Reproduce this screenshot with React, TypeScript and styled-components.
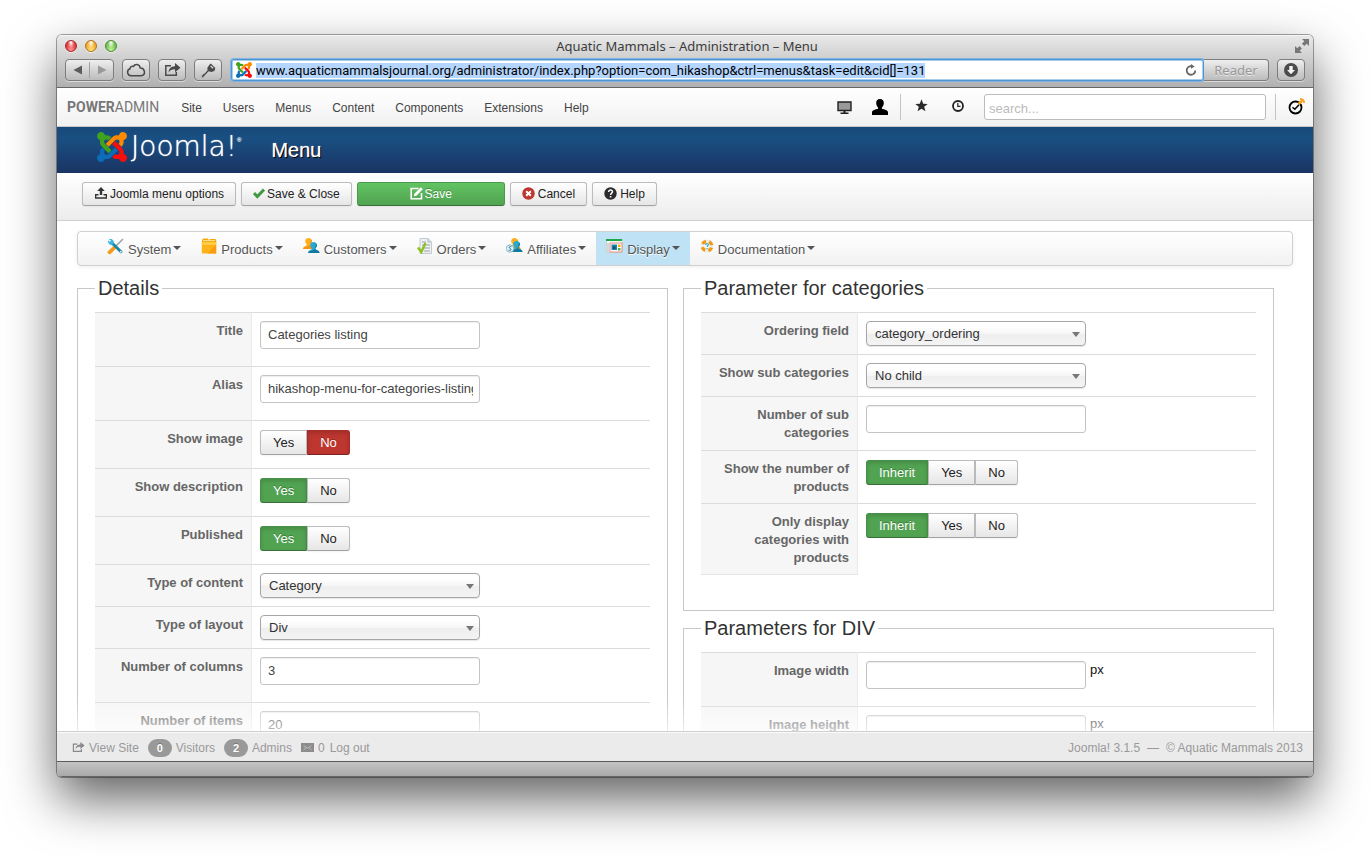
import React, { useEffect, useRef, useState } from "react";
import styled, { createGlobalStyle, css } from "styled-components";

const sans = `"Liberation Sans", Arial, Helvetica, sans-serif`;
const system = `"Noto Sans", "Open Sans", sans-serif`;

const GlobalStyle = createGlobalStyle`
  *, *::before, *::after { box-sizing: border-box; }
  body { margin: 0; background: #fff; color: #333; font: 13px/18px ${sans}; }
  button, input, select { font-family: inherit; }
  a { color: inherit; text-decoration: none; }
  svg { display: block; flex: none; }
`;

/* ---------- window ---------- */

const Desktop = styled.div`
  display: flex;
  height: 100vh;
  min-height: 480px;
  padding: 35px 57px 79px;
  overflow: hidden;
`;

const BrowserWindow = styled.div`
  display: flex;
  flex: 1;
  flex-direction: column;
  min-width: 0;
  border-radius: 5px;
  background: #fff;
  box-shadow: 0 0 0 1px rgba(0, 0, 0, 0.35), 0 22px 50px rgba(0, 0, 0, 0.62);
  overflow: hidden;
`;

const Chrome = styled.div`
  flex: none;
  background: linear-gradient(#e9e9e9, #cfcfcf 45%, #b0b0b0);
  border-bottom: 1px solid #666;
  box-shadow: inset 0 1px 0 #f6f6f6;
`;

const TitleBar = styled.div`
  display: grid;
  grid-template-columns: 1fr auto 1fr;
  align-items: center;
  height: 24px;
  padding: 0 4px 2px 8px;
  color: #3c3c3c;
  font: 13px/22px ${system};
`;

const Lights = styled.div`
  display: flex;
  gap: 8px;
`;

const Light = styled.button<{ $edge: string; $fill: string; $glow: string }>`
  width: 12px;
  height: 12px;
  padding: 0;
  border: 1px solid ${(p) => p.$edge};
  border-radius: 50%;
  background: radial-gradient(ellipse at 50% 15%, #fff 0, rgba(255, 255, 255, 0) 45%),
    radial-gradient(ellipse at 50% 100%, ${(p) => p.$glow} 0, ${(p) => p.$fill} 75%);
  box-shadow: 0 1px 0 rgba(255, 255, 255, 0.6);
`;

const FullScreen = styled.button`
  justify-self: end;
  padding: 0;
  border: 0;
  background: none;
`;

const ChromeTools = styled.div`
  display: flex;
  gap: 8px;
  padding: 0 8px 6px;
`;

const chromeButton = css`
  display: flex;
  align-items: center;
  justify-content: center;
  height: 22px;
  padding: 0;
  border: 1px solid #7d7d7d;
  border-radius: 4px;
  background: linear-gradient(#efefef, #cfcfcf 60%, #bcbcbc);
  box-shadow: 0 1px 0 rgba(255, 255, 255, 0.5);
`;

const ChromeButton = styled.button`
  ${chromeButton}
  width: 28px;
`;

const History = styled.div`
  ${chromeButton}
  width: 49px;
`;

const HistoryButton = styled.button`
  display: flex;
  flex: 1;
  align-items: center;
  justify-content: center;
  height: 16px;
  padding: 0;
  border: 0;
  background: none;
  & + & {
    border-left: 1px solid #a0a0a0;
  }
`;

const AddressGroup = styled.div`
  display: flex;
  flex: 1;
  min-width: 0;
  padding-left: 1px;
`;

const AddressBar = styled.label`
  display: flex;
  flex: 1;
  align-items: center;
  gap: 4px;
  min-width: 0;
  height: 22px;
  padding: 0 6px 0 4px;
  border: 1px solid #4f94cf;
  border-radius: 3px;
  background: #fff;
  box-shadow: 0 0 0 1px #7fb5e4, inset 0 0 0 1px #a5cdee;
`;

const AddressInput = styled.input`
  flex: 1;
  min-width: 0;
  height: 18px;
  padding: 0;
  border: 0;
  outline: 0;
  background: transparent;
  color: #000;
  font: 13px/16px Roboto, ${system};
  &::selection {
    background: #b4d5fe;
    color: #000;
  }
`;

const Reader = styled.button`
  ${chromeButton}
  width: 65px;
  border-left: 0;
  border-radius: 0 4px 4px 0;
  color: #999;
  font: 13px/18px ${system};
  text-shadow: 0 1px 0 rgba(255, 255, 255, 0.6);
`;

/* ---------- admin header ---------- */

const AdminBar = styled.header`
  display: flex;
  flex: none;
  align-items: center;
  height: 39px;
  padding: 0 8px 0 10px;
  border-bottom: 1px solid #c8c8c8;
  background: linear-gradient(#fff, #f1f1f1);
`;

const Brand = styled.a`
  color: #777;
  font: 14px/20px Roboto, ${sans};
`;

const AdminLinks = styled.nav`
  display: flex;
  gap: 21px;
  margin: 2px auto 0 22px;
  color: #444;
  font-size: 12px;
`;

const AdminIcons = styled.div`
  display: flex;
  align-items: center;
  gap: 22px;
  margin-right: 20px;
`;

const IconButton = styled.button`
  display: flex;
  padding: 0;
  border: 0;
  background: none;
  color: #000;
`;

const IconGroup = styled.div<{ $divided?: boolean }>`
  display: flex;
  align-items: center;
  gap: ${(p) => (p.$divided ? 24 : 20)}px;
  height: 26px;
  ${(p) =>
    p.$divided &&
    css`
      margin-left: -10px;
      padding-left: 14px;
      border-left: 1px solid #c4c4c4;
    `}
`;

const SearchInput = styled.input`
  width: 282px;
  height: 26px;
  margin-right: 9px;
  padding: 2px 4px 0;
  border: 1px solid #bbb;
  border-radius: 3px;
  background: #fff;
  font-size: 13px;
  &::placeholder {
    color: #bbb;
  }
`;

const StatusSlot = styled.div`
  display: flex;
  align-items: center;
  height: 26px;
  padding-left: 12px;
  border-left: 1px solid #c4c4c4;
`;

const PageHeader = styled.div`
  display: flex;
  flex: none;
  align-items: center;
  gap: 30px;
  height: 46px;
  padding: 0 40px;
  background: linear-gradient(#18497a, #194f82 25%, #1a3463);
  color: #fff;
`;

const Logo = styled.a`
  display: flex;
  align-items: center;
  gap: 4px;
  height: 36px;
  margin-bottom: 6px;
`;

const LogoText = styled.span`
  font: 200 28px/30px "DejaVu Sans", ${sans};
  text-shadow: 0 0 1px #fff;
`;

const LogoMark = styled.sup`
  font: 6px/8px ${sans};
  vertical-align: 14px;
`;

const PageTitle = styled.h1`
  margin: 0;
  font: 20px/24px ${sans};
  text-shadow: 1px 1px 0 #000, 0 0 1px #fff;
`;

/* ---------- toolbar ---------- */

const Toolbar = styled.div`
  display: flex;
  flex: none;
  gap: 5px;
  padding: 9px 25px 14px;
  border-bottom: 1px solid #d0d0d0;
  background: linear-gradient(#fff, #ececec);
`;

const ToolButton = styled.button<{ $primary?: boolean }>`
  display: flex;
  align-items: center;
  justify-content: center;
  gap: 2px;
  height: 24px;
  padding: 0 11px;
  border: 1px solid #bbb;
  border-bottom-color: #a2a2a2;
  border-radius: 3px;
  background: linear-gradient(#fff, #e6e6e6);
  box-shadow: 0 1px 2px rgba(0, 0, 0, 0.05);
  color: #222;
  font-size: 12px;
  line-height: 18px;
  ${(p) =>
    p.$primary &&
    css`
      width: 148px;
      border-color: #4b9a4b #4b9a4b #387038;
      background: linear-gradient(#62c462, #51a351);
      color: #fff;
      text-shadow: 0 -1px 0 rgba(0, 0, 0, 0.25);
    `}
`;

/* ---------- content ---------- */

const Content = styled.main`
  position: relative;
  flex: 1;
  min-height: 0;
  padding: 10px 20px 0;
  overflow: hidden;
  &::after {
    content: "";
    position: absolute;
    right: 0;
    bottom: 0;
    left: 0;
    height: 32px;
    background: linear-gradient(rgba(255, 255, 255, 0), rgba(255, 255, 255, 0.65));
    pointer-events: none;
  }
`;

const ShopMenu = styled.nav`
  display: flex;
  height: 35px;
  margin-bottom: 12px;
  padding: 0 19px;
  border: 1px solid #d0d0d0;
  border-radius: 4px;
  background: linear-gradient(#fff, #f2f2f2);
  box-shadow: 0 1px 4px rgba(0, 0, 0, 0.07);
`;

const ShopItem = styled.a<{ $active?: boolean }>`
  display: flex;
  align-items: flex-start;
  padding: 6px 10px 0;
  background: ${(p) => (p.$active ? "#bfe2f5" : "transparent")};
  color: #555;
  line-height: 24px;
  text-shadow: 0 1px 0 #fff;
`;

const ShopLabel = styled.span`
  margin: 0 2px 0 4px;
`;

const Caret = styled.span`
  margin-top: 8px;
  border: 4px solid transparent;
  border-top-color: #555;
  border-bottom: 0;
`;

const Columns = styled.div`
  display: grid;
  grid-template-columns: minmax(0, 1fr) minmax(0, 1fr);
  align-items: start;
  gap: 15px;
  padding-right: 19px;
`;

const Column = styled.div`
  display: grid;
  gap: 7px;
`;

const Group = styled.fieldset`
  min-width: 0;
  margin: 0;
  padding: 13px 17px 35px;
  border: 1px solid #c8c8c8;
`;

const Legend = styled.legend`
  padding: 0 3px;
  color: #333;
  font-size: 20px;
  line-height: 21px;
`;

const FormTable = styled.table`
  width: 100%;
  border-collapse: separate;
  border-spacing: 0;
  table-layout: fixed;
`;

const KeyCell = styled.th`
  width: 157px;
  padding: 9px 8px 7px;
  border-top: 1px solid #dcdcdc;
  border-right: 1px solid #e9e9e9;
  background: #f6f6f6;
  color: #666;
  font-weight: bold;
  text-align: right;
  vertical-align: top;
  tr:last-child > & {
    border-bottom: 1px solid #e4e4e4;
  }
`;

const ValueCell = styled.td`
  padding: 8px;
  border-top: 1px solid #dcdcdc;
  vertical-align: top;
`;

const FieldLine = styled.div`
  display: flex;
  gap: 4px;
  color: #111;
`;

const TextInput = styled.input`
  width: 220px;
  height: 28px;
  margin-bottom: 9px;
  padding: 0 6px 1px 7px;
  border: 1px solid #c4c4c4;
  border-radius: 3px;
  background: #fff;
  box-shadow: inset 0 1px 1px rgba(0, 0, 0, 0.075);
  color: #444;
  font-size: 13px;
`;

const SelectBox = styled.div`
  position: relative;
  width: 220px;
  height: 25px;
  &::after {
    content: "";
    position: absolute;
    top: 11px;
    right: 6px;
    border: 4px solid transparent;
    border-top: 5px solid #777;
    border-bottom: 0;
    pointer-events: none;
  }
`;

const Select = styled.select`
  width: 100%;
  height: 25px;
  padding: 0 22px 0 8px;
  border: 1px solid #a6a6a6;
  border-radius: 4px;
  appearance: none;
  background: linear-gradient(#fff 20%, #f6f6f6 50%, #eee 52%, #f4f4f4 100%);
  box-shadow: 0 1px 1px rgba(0, 0, 0, 0.1);
  color: #333;
  font-size: 13px;
`;

const ToggleGroup = styled.div`
  display: flex;
  margin: 1px 0 5px;
`;

const Toggle = styled.label<{ $tone?: "green" | "red" }>`
  position: relative;
  height: 25px;
  padding: 0 12px;
  border: 1px solid #bbb;
  border-bottom-color: #a2a2a2;
  background: linear-gradient(#fff, #e6e6e6);
  box-shadow: 0 1px 2px rgba(0, 0, 0, 0.05);
  color: #222;
  line-height: 23px;
  &:first-child {
    border-radius: 3px 0 0 3px;
  }
  &:last-child {
    border-radius: 0 3px 3px 0;
  }
  ${(p) =>
    p.$tone &&
    css`
      border-color: ${p.$tone === "green" ? "#468f46 #468f46 #387038" : "#a52c27 #a52c27 #802420"};
      background: ${p.$tone === "green" ? "#51a351" : "#bd362f"};
      box-shadow: inset 0 2px 4px rgba(0, 0, 0, 0.15);
      color: #fff;
      text-shadow: 0 -1px 0 rgba(0, 0, 0, 0.25);
    `}
`;

const Radio = styled.input`
  position: absolute;
  inset: 0;
  margin: 0;
  opacity: 0;
`;

/* ---------- footer ---------- */

const StatusBar = styled.footer`
  display: flex;
  flex: none;
  align-items: center;
  gap: 9px;
  height: 30px;
  padding: 2px 10px 0 15px;
  border-top: 1px solid #cfcfcf;
  background: #ebebeb;
  box-shadow: inset 0 1px 0 #fafafa;
  color: #999;
  font-size: 12px;
`;

const StatusItem = styled.a<{ $push?: boolean }>`
  display: flex;
  align-items: center;
  gap: ${(p) => (p.$push ? 7 : 4)}px;
  margin-left: ${(p) => (p.$push ? "auto" : 0)};
  white-space: nowrap;
`;

const MailGroup = styled.div`
  display: flex;
  gap: 5px;
`;

const Pill = styled.span`
  width: 24px;
  height: 18px;
  border-radius: 9px;
  background: #999;
  color: #fff;
  font-size: 11px;
  font-weight: bold;
  text-align: center;
  text-shadow: 0 -1px 0 rgba(0, 0, 0, 0.25);
`;

const BottomEdge = styled.div`
  flex: none;
  height: 16px;
  border-top: 1px solid #5c5c5c;
  border-bottom: 1px solid #666;
  background: linear-gradient(#c4c4c4, #a9a9a9);
`;

/* ---------- icons ---------- */

const JoomlaIcon = ({ size }: { size: number }) => (
  <svg width={size} height={size} viewBox="0 32 448 448" aria-hidden="true">
    <path fill="#3fa31d" d="M.6 92.1C.6 58.8 27.4 32 60.4 32c30 0 54.5 21.9 59.2 50.2 32.6-7.6 67.1.6 96.5 30l-44.3 44.3c-20.5-20.5-42.6-16.3-55.4-3.5-14.3 14.3-14.3 37.9 0 52.2l99.5 99.5-44 44.3c-87.7-87.2-49.7-49.7-99.8-99.7-26.8-26.5-35-64.8-24.8-98.9C20.4 144.6.6 120.7.6 92.1z" />
    <path fill="#ff8a00" d="M130.1 208.5l44.3 44.3c10-10 89.7-89.7 99.7-99.8 14.3-14.3 37.6-14.3 51.9 0 12.8 12.8 17 35-3.5 55.4l44 44.3c31.2-31.2 38.5-67.6 28.9-101.2 29.2-4.1 51.9-29.2 51.9-59.5 0-33.2-26.8-60.1-59.8-60.1-30.3 0-55.4 22.5-59.5 51.6-33.8-9.9-71.7-1.5-98.3 25.1-18.3 19.1-71.1 71.5-99.6 99.9z" />
    <path fill="#f90c0c" d="M396.4 360.7c8.2-32.7-.9-68.5-26.3-93.9-11.8-12.2 5 4.7-99.5-99.7l-44.3 44.3 99.7 99.7c14.3 14.3 14.3 37.6 0 51.9-12.8 12.8-35 17-55.4-3.5l-44 44.3c27.6 30.2 68 38.8 102.7 28 5.5 27.4 29.7 48.1 58.9 48.1 33 0 59.8-26.8 59.8-60.1 0-30.2-22.5-55-51.6-59.1z" />
    <path fill="#0b6cb8" d="M312.1 307.6l-44-44.3c-87 86.4-50.4 50.4-99.7 99.8-14.3 14.3-37.6 14.3-51.9 0-13.1-13.4-16.9-35.3 3.2-55.4l-44-44.3c-30.2 30.2-38 65.2-29.5 98.3-26.7 6-46.2 29.9-46.2 58.2C0 453.2 26.8 480 59.8 480c28.6 0 52.5-19.8 58.6-46.7 32.7 8.2 68.5-.6 94.2-26 32.1-32 12.2-12.4 99.5-99.7z" />
  </svg>
);

const FullScreenIcon = () => (
  <svg width="14" height="14" viewBox="0 0 14 14" fill="#777" aria-hidden="true">
    <path d="M7 0h7v7l-2.300-2.300-2.400 2.400-2.400-2.400 2.400-2.400z" />
    <path d="M7 14H0V7l2.300 2.300 2.200-2.200 2.400 2.400-2.200 2.200z" />
  </svg>
);

const Arrow = ({ back }: { back?: boolean }) => (
  <svg width="10" height="10" viewBox="0 0 10 10" aria-hidden="true">
    <path d={back ? "M9 .5v9L.5 5z" : "M1 .5v9L9.500 5z"} fill={back ? "#5c5c5c" : "#999"} />
  </svg>
);

const CloudIcon = () => (
  <svg width="20" height="14" viewBox="0 0 20 14" fill="none" stroke="#4a4a4a" strokeWidth="1.500" aria-hidden="true">
    <path d="M5 12.800a3.600 3.600 0 0 1-1-7c0-2 2-3.100 3.500-2.400C8.600.8 13.500.3 14.200 5c4.500-.3 6.200 6.600 1.300 7.800z" />
  </svg>
);

const ShareIcon = ({ color = "#4a4a4a", width = 17 }: { color?: string; width?: number }) => (
  <svg width={width} height={(width * 14) / 17} viewBox="0 0 17 14" fill="none" aria-hidden="true">
    <path d="M7 2.800H1.800v9.400h10.500V9" stroke={color} strokeWidth="1.500" />
    <path d="M4.500 9.500C4.800 5.500 7 3.300 11 3.200V0l5.500 4.700L11 9.200V6.300c-3 0-5 .8-6.500 3.200z" fill={color} />
  </svg>
);

const KeyIcon = () => (
  <svg width="15" height="15" viewBox="0 0 15 15" aria-hidden="true">
    <path d="M8.200 2 9.800.6 14.300 5 13.600 7.800 10.700 9 8.500 8.400 7.700 8.200 2.600 13.600 2.500 14.300.8 14.300.8 12.500 2 12.300 2.200 11 3.500 10.700 6.600 7.200 6.300 5z" fill="#4a4a4a" />
    <path d="m9.600 2.900 2.500 2.400" stroke="#ddd" strokeWidth="1.300" />
  </svg>
);

const ReloadIcon = () => (
  <svg width="12" height="12" viewBox="0 0 12 12" fill="none" aria-hidden="true">
    <path d="M10.300 6.500A4.300 4.300 0 1 1 6.500 2.200" stroke="#666" strokeWidth="1.800" />
    <path d="M6 0v4.800L9.600 2.400z" fill="#666" />
  </svg>
);

const DownloadIcon = () => (
  <svg width="14" height="14" viewBox="0 0 14 14" aria-hidden="true">
    <circle cx="7" cy="7" r="7" fill="#4c4c4c" />
    <path d="M5.300 3h3.400v4h2.300L7 11.200 3 7h2.300z" fill="#f4f4f4" />
  </svg>
);

const MonitorIcon = () => (
  <svg width="15" height="13" viewBox="0 0 15 13" aria-hidden="true">
    <path d="M1 1h13v8.500H1z" fill="#999" stroke="#222" strokeWidth="1.400" />
    <path d="M6.500 10h2v1.500h3V13h-8v-1.500h3z" fill="#222" />
  </svg>
);

const UserIcon = () => (
  <svg width="16" height="16" viewBox="0 0 16 16" aria-hidden="true">
    <path d="M8 0c2.600 0 4 1.800 3.800 4.300-.1 1.900-.9 3.500-1.900 4.200v1.300c2.500.7 5.600 1.300 6.100 3.200V16H0v-3c.5-1.900 3.600-2.500 6.100-3.200V8.500C5.100 7.800 4.300 6.200 4.200 4.300 4 1.800 5.400 0 8 0z" />
  </svg>
);

const StarIcon = () => (
  <svg width="13" height="16" viewBox="0 0 13 16" aria-hidden="true">
    <path d="M6.500.3 8.200 4.700l4.500.2-3.500 2.900 1.200 4.500-3.900-2.500-3.900 2.500 1.200-4.500L.3 4.900l4.500-.2z" fill="#2a2a2a" />
  </svg>
);

const ClockIcon = () => (
  <svg width="12" height="14" viewBox="0 0 12 14" fill="none" stroke="#222" aria-hidden="true">
    <circle cx="6" cy="6" r="5" strokeWidth="1.800" />
    <path d="M5.800 3v3.400h2.700" strokeWidth="1.200" />
  </svg>
);

const StatusIcon = () => (
  <svg width="17" height="19" viewBox="0 0 17 19" fill="none" aria-hidden="true">
    <circle cx="7.500" cy="9.500" r="6" stroke="#000" strokeWidth="1.800" />
    <path d="m4.500 9.300 2.300 2 4.200-4.500" stroke="#000" strokeWidth="1.500" />
    <path d="m10.500 6 3.500-3.300" stroke="#f7a11a" strokeWidth="2.600" />
    <path d="M12 .8c2.300.3 4 1.800 4.200 4" stroke="#f7a11a" strokeWidth="1.800" />
  </svg>
);

const UploadIcon = () => (
  <svg width="14" height="14" viewBox="0 0 14 14" fill="#333" aria-hidden="true">
    <path d="M7 0l3.800 4H8.200v4H5.800V4H3.200z" />
    <path d="M1 7h3.500v1.500H2.300v1.800h9.400V8.500H9.500V7H13v4.800H1z" />
  </svg>
);

const CheckIcon = () => (
  <svg width="12" height="13" viewBox="0 0 12 13" aria-hidden="true">
    <path d="M1 5 4.300 8.500 11 1.600" fill="none" stroke="#429b42" strokeWidth="3" />
  </svg>
);

const EditIcon = () => (
  <svg width="13" height="15" viewBox="0 0 13 15" fill="none" aria-hidden="true">
    <path d="M8.500 1.500H1.200v10.300h10.300V6" stroke="#fff" strokeWidth="1.600" />
    <path d="M3.800 9.300 4.400 6.700 10.800.3l2 2-6.400 6.400z" fill="#fff" />
  </svg>
);

const CancelIcon = () => (
  <svg width="14" height="15" viewBox="0 0 14 15" aria-hidden="true">
    <circle cx="6.500" cy="6.500" r="6.200" fill="#bd362f" />
    <path d="m4.200 4.200 4.600 4.600m0-4.600L4.200 8.800" stroke="#fff" strokeWidth="2" />
  </svg>
);

const HelpIcon = () => (
  <svg width="14" height="15" viewBox="0 0 14 15" fill="none" aria-hidden="true">
    <circle cx="6.500" cy="6.500" r="6.200" fill="#2b2b2b" />
    <path d="M4.600 5c0-2.600 4-2.400 3.900-.2C8.400 6.200 6.600 6 6.600 8" stroke="#fff" strokeWidth="1.500" />
    <path d="M5.800 9h1.600v1.500H5.800z" fill="#fff" />
  </svg>
);

const SystemIcon = () => (
  <svg width="17" height="17" viewBox="0 0 17 17" fill="none" strokeLinecap="round" aria-hidden="true">
    <path d="M15.500 1.500 7 10" stroke="#9aa5ad" strokeWidth="1.600" />
    <path d="M7 10 2.500 14.300" stroke="#f79a1c" strokeWidth="3.800" />
    <path d="m4.500 4.500 9.500 9.300" stroke="#1b87a8" strokeWidth="3" />
    <path d="M3 1.400 4.900 3.300 3.300 4.900 1.400 3C1 5.500 3.500 7.200 5.500 6.200 7.300 4.200 6 .9 3 1.400z" fill="#39b8e0" stroke="#39b8e0" />
    <circle cx="13.800" cy="13.700" r="1" fill="#d8eef6" />
  </svg>
);

const ProductsIcon = () => (
  <svg width="16" height="16" viewBox="0 0 16 16" aria-hidden="true">
    <path d="M1 2 2.500.4h4L8 2l1-1h5.500l.8 1.500V5H1z" fill="#f5a800" />
    <path d="M.8 4.200h14.400v11.300H.8z" fill="#ffb31a" />
    <path d="M.8 4.200h14.400v2.500H.8z" fill="#ffd04a" />
    <path d="M15.200 6.700v8.800H6z" fill="#f99d10" />
    <path d="M2 2.600h12" stroke="#ffe79a" />
  </svg>
);

const Person = ({ x, y, color, dark }: { x: number; y: number; color: string; dark: string }) => (
  <g transform={`translate(${x} ${y})`}>
    <path d="M0 11c0-2.500 2-2.900 3.600-3.600V6C1.500 4.800 1.600.1 5.500.1S9.500 4.800 7.400 6v1.400C9 8.100 11.500 8.500 11.500 11z" fill={color} />
    <path d="M0 11c.5-1.500 2-2 3.600-2.400C6 8.500 8 6 7.800 1c1.900 1.600 1.300 4.300-.4 5v1.400C9 8.100 11.500 8.500 11.500 11z" fill={dark} />
  </g>
);

const CustomersIcon = () => (
  <svg width="17" height="17" viewBox="0 0 17 17" aria-hidden="true">
    <Person x={0} y={0} color="#ffae1c" dark="#f49410" />
    <Person x={5} y={4} color="#2aa9cf" dark="#127a9e" />
  </svg>
);

const OrdersIcon = () => (
  <svg width="16" height="16" viewBox="0 0 16 16" fill="none" aria-hidden="true">
    <path d="M3 .5h8L14.500 4v11.500H3z" fill="#eef1f3" stroke="#c3cacf" />
    <path d="M11 .5V4h3.500" fill="#d3dade" stroke="#b3bcc2" />
    <path d="M5 4h4m-4 3h8m-6 3h6m-6 3h6" stroke="#98a3ab" />
    <path d="M1 9.500 4.300 14 8.500 5" stroke="#8cc21a" strokeWidth="2.400" />
  </svg>
);

const AffiliatesIcon = () => (
  <svg width="17" height="17" viewBox="0 0 17 17" fill="none" aria-hidden="true">
    <Person x={3} y={0} color="#ffae1c" dark="#f49410" />
    <Person x={5} y={3} color="#2aa9cf" dark="#127a9e" />
    <circle cx="4" cy="10.500" r="3.700" fill="#e8f4f9" stroke="#88b6c8" />
    <path d="M5.500 8.800C3.500 7.800 2.300 9.600 4 10.400c2 .8.800 2.700-1.400 1.700" stroke="#267090" />
  </svg>
);

const DisplayIcon = () => (
  <svg width="17" height="16" viewBox="0 0 17 16" fill="none" aria-hidden="true">
    <path d="M.5 1.500h16v13H.5z" fill="#f3f7f5" stroke="#c4d8cc" />
    <path d="M0 1h16v2H0z" fill="#19a94a" />
    <path d="M4 5h12v9H4z" fill="#fff" stroke="#ea8a8a" />
    <path d="M5.500 6.500H11v5.500H5.500z" fill="#1686ae" />
    <path d="M7 8.500h2.500v2.500H7z" fill="#134e6a" />
    <path d="M12 6.500h2.500v2.500H12z" fill="#f7b500" />
    <path d="M12 10h2.500v2.500H12z" fill="#4bb04b" />
    <path d="M2 5v9" stroke="#bbb" />
  </svg>
);

const DocsIcon = () => (
  <svg width="14" height="16" viewBox="0 0 14 16" fill="none" aria-hidden="true">
    <circle cx="7" cy="8" r="4.800" stroke="#eee" strokeWidth="3.200" />
    <circle cx="7" cy="8" r="4.800" stroke="#f29a12" strokeWidth="3.400" strokeDasharray="4.200 3.340" strokeDashoffset="-1.700" />
    <path d="M5.500 7c0-2 3-1.800 2.900-.2-.1 1.100-1.300 1-1.300 2.300m0 1v1.200" stroke="#3a9fd0" strokeWidth="1.200" />
  </svg>
);

const MailIcon = () => (
  <svg width="13" height="9" viewBox="0 0 13 9" fill="none" aria-hidden="true">
    <path d="M0 0h13v9H0z" fill="#8c8c8c" />
    <path d="m2.500 2.500 4 2.800 4-2.800M2.500 7 5 4.800M10.500 7 8 4.800" stroke="#c9c9c9" strokeWidth=".8" />
  </svg>
);

/* ---------- form pieces ---------- */

const Row = ({ id, label, children }: { id: string; label: string; children: React.ReactNode }) => (
  <tr>
    <KeyCell scope="row">
      <label id={`${id}-label`} htmlFor={id}>
        {label}
      </label>
    </KeyCell>
    <ValueCell>{children}</ValueCell>
  </tr>
);

type TextRowProps = { id: string; label: string; value?: string; unit?: string };

const TextRow = ({ id, label, value = "", unit }: TextRowProps) => (
  <Row id={id} label={label}>
    <FieldLine>
      <TextInput id={id} type="text" defaultValue={value} />
      {unit}
    </FieldLine>
  </Row>
);

const SelectRow = ({ id, label, options }: { id: string; label: string; options: string[] }) => (
  <Row id={id} label={label}>
    <SelectBox>
      <Select id={id}>
        {options.map((option) => (
          <option key={option}>{option}</option>
        ))}
      </Select>
    </SelectBox>
  </Row>
);

type ToggleRowProps = { id: string; label: string; options: string[]; initial: string };

const ToggleRow = ({ id, label, options, initial }: ToggleRowProps) => {
  const [value, setValue] = useState(initial);
  return (
    <tr>
      <KeyCell scope="row" id={`${id}-label`}>
        {label}
      </KeyCell>
      <ValueCell>
        <ToggleGroup role="radiogroup" aria-labelledby={`${id}-label`}>
          {options.map((option) => (
            <Toggle key={option} $tone={option !== value ? undefined : option === "No" ? "red" : "green"}>
              <Radio type="radio" name={id} checked={option === value} onChange={() => setValue(option)} />
              {option}
            </Toggle>
          ))}
        </ToggleGroup>
      </ValueCell>
    </tr>
  );
};

const shopItems = [
  { label: "System", icon: <SystemIcon /> },
  { label: "Products", icon: <ProductsIcon /> },
  { label: "Customers", icon: <CustomersIcon /> },
  { label: "Orders", icon: <OrdersIcon /> },
  { label: "Affiliates", icon: <AffiliatesIcon /> },
  { label: "Display", icon: <DisplayIcon />, active: true },
  { label: "Documentation", icon: <DocsIcon /> },
];

const adminLinks = ["Site", "Users", "Menus", "Content", "Components", "Extensions", "Help"];
const yesNo = ["Yes", "No"];
const inheritYesNo = ["Inherit", "Yes", "No"];

export default function App() {
  const address = useRef<HTMLInputElement>(null);

  useEffect(() => {
    address.current?.focus();
    address.current?.select();
  }, []);

  return (
    <>
      <GlobalStyle />
      <Desktop>
        <BrowserWindow>
          <Chrome>
            <TitleBar>
              <Lights>
                <Light $edge="#a3272b" $fill="#e0383e" $glow="#ff9a9a" aria-label="Close" />
                <Light $edge="#b07218" $fill="#f2a62c" $glow="#ffe98a" aria-label="Minimize" />
                <Light $edge="#4b8a35" $fill="#6fbf4e" $glow="#c9f5a4" aria-label="Zoom" />
              </Lights>
              <span>Aquatic Mammals – Administration – Menu</span>
              <FullScreen aria-label="Full screen">
                <FullScreenIcon />
              </FullScreen>
            </TitleBar>
            <ChromeTools>
              <History>
                <HistoryButton aria-label="Back">
                  <Arrow back />
                </HistoryButton>
                <HistoryButton aria-label="Forward">
                  <Arrow />
                </HistoryButton>
              </History>
              <ChromeButton aria-label="iCloud tabs">
                <CloudIcon />
              </ChromeButton>
              <ChromeButton aria-label="Share">
                <ShareIcon />
              </ChromeButton>
              <ChromeButton aria-label="Passwords">
                <KeyIcon />
              </ChromeButton>
              <AddressGroup>
                <AddressBar>
                  <JoomlaIcon size={16} />
                  <AddressInput
                    ref={address}
                    aria-label="Address"
                    defaultValue="www.aquaticmammalsjournal.org/administrator/index.php?option=com_hikashop&ctrl=menus&task=edit&cid[]=131"
                  />
                  <ReloadIcon />
                </AddressBar>
                <Reader>Reader</Reader>
              </AddressGroup>
              <ChromeButton aria-label="Downloads">
                <DownloadIcon />
              </ChromeButton>
            </ChromeTools>
          </Chrome>

          <AdminBar>
            <Brand href="#">
              <b>POWER</b>ADMIN
            </Brand>
            <AdminLinks>
              {adminLinks.map((link) => (
                <a key={link} href="#">
                  {link}
                </a>
              ))}
            </AdminLinks>
            <AdminIcons>
              <IconGroup>
                <IconButton aria-label="Preview">
                  <MonitorIcon />
                </IconButton>
                <IconButton aria-label="Account">
                  <UserIcon />
                </IconButton>
              </IconGroup>
              <IconGroup $divided>
                <IconButton aria-label="Favorites">
                  <StarIcon />
                </IconButton>
                <IconButton aria-label="History">
                  <ClockIcon />
                </IconButton>
              </IconGroup>
            </AdminIcons>
            <SearchInput type="search" placeholder="search..." aria-label="Search" />
            <StatusSlot>
              <IconButton aria-label="Status">
                <StatusIcon />
              </IconButton>
            </StatusSlot>
          </AdminBar>

          <PageHeader>
            <Logo href="#">
              <JoomlaIcon size={30} />
              <LogoText>
                Joomla!<LogoMark>®</LogoMark>
              </LogoText>
            </Logo>
            <PageTitle>Menu</PageTitle>
          </PageHeader>

          <Toolbar>
            <ToolButton>
              <UploadIcon /> Joomla menu options
            </ToolButton>
            <ToolButton>
              <CheckIcon /> Save &amp; Close
            </ToolButton>
            <ToolButton $primary>
              <EditIcon /> Save
            </ToolButton>
            <ToolButton>
              <CancelIcon /> Cancel
            </ToolButton>
            <ToolButton>
              <HelpIcon /> Help
            </ToolButton>
          </Toolbar>

          <Content>
            <ShopMenu>
              {shopItems.map((item) => (
                <ShopItem key={item.label} href="#" $active={item.active}>
                  {item.icon}
                  <ShopLabel>{item.label}</ShopLabel>
                  <Caret />
                </ShopItem>
              ))}
            </ShopMenu>
            <Columns>
              <Column>
                <Group>
                  <Legend>Details</Legend>
                  <FormTable>
                    <tbody>
                      <TextRow id="title" label="Title" value="Categories listing" />
                      <TextRow id="alias" label="Alias" value="hikashop-menu-for-categories-listing" />
                      <ToggleRow id="show-image" label="Show image" options={yesNo} initial="No" />
                      <ToggleRow id="show-description" label="Show description" options={yesNo} initial="Yes" />
                      <ToggleRow id="published" label="Published" options={yesNo} initial="Yes" />
                      <SelectRow id="content-type" label="Type of content" options={["Category", "Product"]} />
                      <SelectRow id="layout-type" label="Type of layout" options={["Div", "Table", "List"]} />
                      <TextRow id="columns" label="Number of columns" value="3" />
                      <TextRow id="items" label="Number of items" value="20" />
                    </tbody>
                  </FormTable>
                </Group>
              </Column>
              <Column>
                <Group>
                  <Legend>Parameter for categories</Legend>
                  <FormTable>
                    <tbody>
                      <SelectRow id="ordering" label="Ordering field" options={["category_ordering", "category_name"]} />
                      <SelectRow id="sub-categories" label="Show sub categories" options={["No child", "All children"]} />
                      <TextRow id="sub-count" label="Number of sub categories" />
                      <ToggleRow id="product-count" label="Show the number of products" options={inheritYesNo} initial="Inherit" />
                      <ToggleRow id="with-products" label="Only display categories with products" options={inheritYesNo} initial="Inherit" />
                    </tbody>
                  </FormTable>
                </Group>
                <Group>
                  <Legend>Parameters for DIV</Legend>
                  <FormTable>
                    <tbody>
                      <TextRow id="image-width" label="Image width" unit="px" />
                      <TextRow id="image-height" label="Image height" unit="px" />
                    </tbody>
                  </FormTable>
                </Group>
              </Column>
            </Columns>
          </Content>

          <StatusBar>
            <StatusItem href="#">
              <ShareIcon color="#888" width={13} />
              View Site
            </StatusItem>
            <StatusItem href="#">
              <Pill>0</Pill>
              Visitors
            </StatusItem>
            <StatusItem href="#">
              <Pill>2</Pill>
              Admins
            </StatusItem>
            <MailGroup>
              <StatusItem href="#">
                <MailIcon />0
              </StatusItem>
              <StatusItem href="#">Log out</StatusItem>
            </MailGroup>
            <StatusItem as="span" $push>
              <span>Joomla! 3.1.5</span>
              <span>—</span>
              <span>© Aquatic Mammals 2013</span>
            </StatusItem>
          </StatusBar>
          <BottomEdge />
        </BrowserWindow>
      </Desktop>
    </>
  );
}
